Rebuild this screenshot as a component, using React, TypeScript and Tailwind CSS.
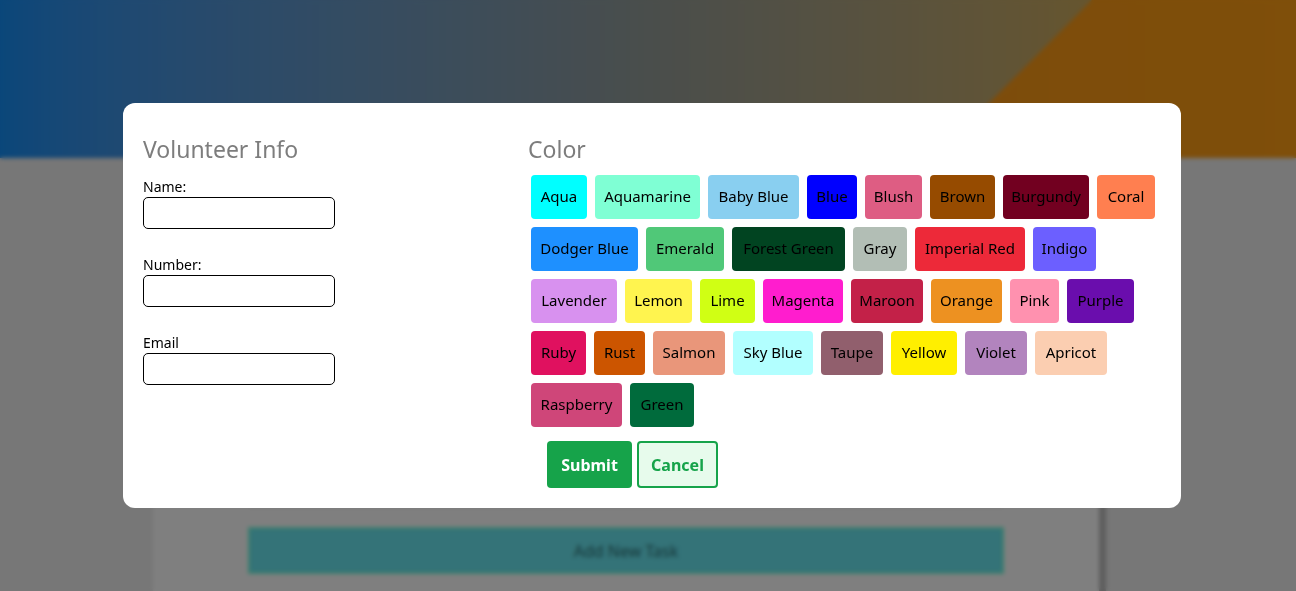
import React from "react";

const chips: { name: string; cls: string }[] = [
  { name: "Aqua", cls: "bg-[#00ffff] w-[56px]" },
  { name: "Aquamarine", cls: "bg-[#7fffd4] w-[105px]" },
  { name: "Baby Blue", cls: "bg-[#89cff0] w-[91px]" },
  { name: "Blue", cls: "bg-[#0000ff] w-[50px]" },
  { name: "Blush", cls: "bg-[#de5d83] w-[57px]" },
  { name: "Brown", cls: "bg-[#964b00] w-[65px]" },
  { name: "Burgundy", cls: "bg-[#720020] w-[86px]" },
  { name: "Coral", cls: "bg-[#ff7f50] w-[58px]" },
  { name: "Dodger Blue", cls: "bg-[#1e90ff] w-[107px]" },
  { name: "Emerald", cls: "bg-[#50c878] w-[78px]" },
  { name: "Forest Green", cls: "bg-[#014421] w-[113px]" },
  { name: "Gray", cls: "bg-[#b2beb5] w-[54px]" },
  { name: "Imperial Red", cls: "bg-[#ed2939] w-[110px]" },
  { name: "Indigo", cls: "bg-[#6c5fff] w-[63px]" },
  { name: "Lavender", cls: "bg-[#d891ef] w-[86px]" },
  { name: "Lemon", cls: "bg-[#fff44f] w-[67px]" },
  { name: "Lime", cls: "bg-[#d0ff14] w-[55px]" },
  { name: "Magenta", cls: "bg-[#ff1dce] w-[80px]" },
  { name: "Maroon", cls: "bg-[#c32148] w-[72px]" },
  { name: "Orange", cls: "bg-[#ed9121] w-[71px]" },
  { name: "Pink", cls: "bg-[#ff91af] w-[49px]" },
  { name: "Purple", cls: "bg-[#6a0dad] w-[67px]" },
  { name: "Ruby", cls: "bg-[#e0115f] w-[55px]" },
  { name: "Rust", cls: "bg-[#cc5500] w-[51px]" },
  { name: "Salmon", cls: "bg-[#e9967a] w-[72px]" },
  { name: "Sky Blue", cls: "bg-[#b2ffff] w-[80px]" },
  { name: "Taupe", cls: "bg-[#915f6d] w-[62px]" },
  { name: "Yellow", cls: "bg-[#ffef00] w-[66px]" },
  { name: "Violet", cls: "bg-[#b284be] w-[62px]" },
  { name: "Apricot", cls: "bg-[#fbceb1] w-[72px]" },
  { name: "Raspberry", cls: "bg-[#cf4679] w-[91px]" },
  { name: "Green", cls: "bg-[#006b3c] w-[64px]" },
];

const font = { fontFamily: '"Noto Sans", "Open Sans", sans-serif' };

function Field({ label }: { label: string }) {
  return (
    <div className="mb-[26px]">
      <div className="text-[14px] leading-[20px] text-black">{label}</div>
      <input
        className="block w-[192px] h-[32px] border border-black rounded-[5px] bg-white outline-none"
        type="text"
      />
    </div>
  );
}

export default function App() {
  return (
    <div className="relative w-full h-[591px] overflow-hidden bg-[#eeeeee]" style={font}>
      {/* Background page */}
      <div className="absolute inset-0">
        <div className="relative h-[158px] bg-gradient-to-r from-[#148ef4] via-[#949c98] to-[#e6b028] overflow-hidden">
          <div className="absolute inset-0 bg-gradient-to-r from-[#f28a1e] to-[#fe9e14] [clip-path:polygon(1092px_0,100%_0,100%_100%,934px_100%)]" />
        </div>
        <div className="flex h-[433px]">
          <div className="w-[153px]" />
          <div className="w-[946px] bg-white flex flex-col items-center">
            <div className="h-[350px] w-[756px] border-b border-[#e8e8e8]" />
            <div className="mt-[19px] w-[756px] h-[47px] bg-[#68e6f0] border-2 border-[#78fed8] flex items-center justify-center text-[16px] text-[#2e7478]">
              Add New Task
            </div>
          </div>
          <div className="w-[7px] bg-[#bcbcbc]" />
        </div>
      </div>

      {/* Overlay + Modal */}
      <div className="absolute inset-0 bg-black/50 backdrop-blur-[2px] flex justify-center items-start pt-[103px] pl-[8px]">
        <div className="w-[1058px] h-[405px] bg-white rounded-xl px-5 pt-[30px] flex">
          <div className="w-[385px]">
            <h2 className="text-[23px] leading-[32px] text-[#7d7d7d] mb-[12px]">Volunteer Info</h2>
            <Field label="Name:" />
            <Field label="Number:" />
            <Field label="Email" />
          </div>
          <div className="flex-1">
            <h2 className="text-[23px] leading-[32px] text-[#7d7d7d] mb-[10px]">Color</h2>
            <div className="flex flex-wrap gap-2 pl-[3px]">
              {chips.map((c) => (
                <div
                  key={c.name}
                  className={`${c.cls} h-[44px] pb-[1px] rounded-[4px] flex items-center justify-center text-[15px] text-black whitespace-nowrap`}
                >
                  {c.name}
                </div>
              ))}
            </div>
            <div className="flex gap-[5px] pl-[19px] mt-[14px]">
              <button className="w-[85px] h-[47px] rounded-[4px] bg-[#16a34a] text-white font-bold text-[16px]">
                Submit
              </button>
              <button className="w-[81px] h-[47px] rounded-[4px] bg-[#e7fbec] border-2 border-[#16a34a] text-[#16a34a] font-bold text-[16px]">
                Cancel
              </button>
            </div>
          </div>
        </div>
      </div>
    </div>
  );
}
